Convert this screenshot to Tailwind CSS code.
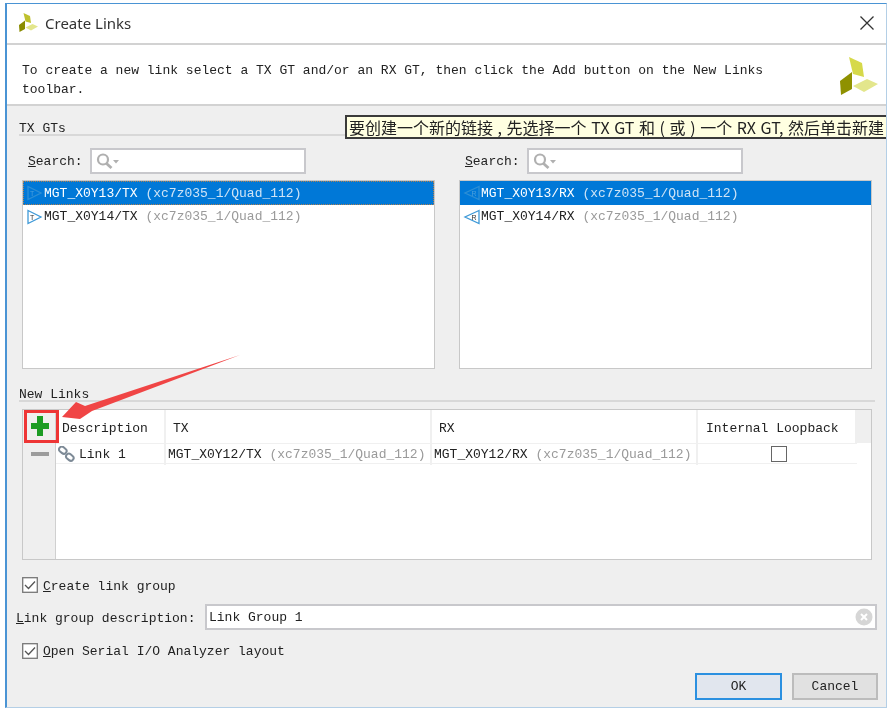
<!DOCTYPE html>
<html>
<head>
<meta charset="utf-8">
<script src="https://cdn.jsdelivr.net/npm/@tailwindcss/browser@4"></script>
</head>
<body class="bg-white">
<div class="w-[893px] h-[713px] overflow-hidden bg-white pt-[3px] pl-[5px] font-['Liberation_Mono',monospace] text-[13px] text-[#222] blur-[0.5px]">
  <div class="relative w-[882px] h-[705px] flex flex-col overflow-hidden border-t border-l-2 border-r border-b border-t-[#4a94d4] border-l-[#4a94d4] border-r-[#b4cfe6] border-b-[#b4cfe6] bg-white">
    <!-- title -->
    <div class="h-[41px] shrink-0 flex items-center border-b-2 border-[#d2d2d2] pl-[11px] pr-[12px]">
      <svg class="-mt-[3px]" width="21" height="21" viewBox="0 0 42 42"><path d="M11 2 24 8 26 22 15 19Z" fill="#bfc12e"/><path d="M2 26 14 17 14 34 3 40Z" fill="#8a8c00"/><path d="M15 31 29 24 40 29 26 37Z" fill="#e3e68c"/></svg>
      <span class="ml-[6px] font-['Noto_Sans',sans-serif] text-[15px] text-[#333]">Create Links</span>
      <svg class="ml-auto -mt-[2px]" width="14" height="14" viewBox="0 0 14 14"><path d="M0.5 0.5 13.5 13.5M13.5 0.5 0.5 13.5" stroke="#333" stroke-width="1.3" fill="none"/></svg>
    </div>
    <!-- description -->
    <div class="relative h-[61px] shrink-0 border-b-2 border-[#d2d2d2] pl-[15px] pt-[16px] leading-[19px]">
      <p class="w-[760px]">To create a new link select a TX GT and/or an RX GT, then click the Add button on the New Links toolbar.</p>
      <svg class="absolute left-[831px] top-[10px]" width="42" height="42" viewBox="0 0 42 42"><path d="M11 2 24 8 26 22 15 19Z" fill="#d6d94a"/><path d="M2 26 14 17 14 34 3 40Z" fill="#8f9100"/><path d="M15 31 29 24 40 29 26 37Z" fill="#e3e68c"/></svg>
    </div>
    <!-- body -->
    <div class="flex-1 flex flex-col bg-[#efefef] pl-[9px] pr-[9px]">
      <div class="mt-[14px] ml-[3px] mr-[2px] h-[16px] border-b-2 border-[#d8d8d8] leading-[18px]">TX GTs</div>
      <div class="mt-[12px] ml-[6px] mr-[5px] grid grid-cols-2 gap-x-[24px]">
        <div>
          <div class="flex items-center h-[26px] pl-[6px]">
            <span class="w-[62px] pt-[2px]"><span class="underline">S</span>earch:</span>
            <div class="w-[216px] h-[26px] bg-white border-2 border-[#c8c8cc] flex items-center pl-[4px]">
              <svg width="24" height="16" viewBox="0 0 24 16"><circle cx="7" cy="6.500" r="5" fill="none" stroke="#b0b0b0" stroke-width="2.200"/><path d="M10.500 10.500 15.500 15" stroke="#b0b0b0" stroke-width="2.800"/><path d="M17 7h6l-3 3.500Z" fill="#b0b0b0"/></svg>
            </div>
          </div>
          <div class="mt-[6px] h-[189px] bg-white border border-[#c8c8c8]">
            <div class="h-[24px] bg-[#0078d7] border border-dotted border-[#b08050] flex items-center pl-[2px] text-white">
              <svg class="w-[18px] shrink-0" width="18" height="16" viewBox="0 0 18 16"><path d="M2 1.500 15 8 2 14.500Z" fill="#0078d7" stroke="#2d8fd5" stroke-width="1.300"/><text x="4" y="10.500" font-size="7" fill="#4a9fdc" font-family="Liberation Sans">T</text></svg>
              <span class="whitespace-pre pt-px">MGT_X0Y13/TX <span class="text-[#cfe4f6]">(xc7z035_1/Quad_112)</span></span>
            </div>
            <div class="h-[23px] flex items-center pl-[3px]">
              <svg class="w-[18px] shrink-0" width="18" height="16" viewBox="0 0 18 16"><path d="M2 1.500 15 8 2 14.500Z" fill="#fff" stroke="#3f9ad8" stroke-width="1.300"/><text x="4" y="10.500" font-size="7" fill="#333" font-family="Liberation Sans">T</text></svg>
              <span class="whitespace-pre">MGT_X0Y14/TX <span class="text-[#9a9a9a]">(xc7z035_1/Quad_112)</span></span>
            </div>
          </div>
        </div>
        <div>
          <div class="flex items-center h-[26px] pl-[6px]">
            <span class="w-[62px] pt-[2px]"><span class="underline">S</span>earch:</span>
            <div class="w-[216px] h-[26px] bg-white border-2 border-[#c8c8cc] flex items-center pl-[4px]">
              <svg width="24" height="16" viewBox="0 0 24 16"><circle cx="7" cy="6.500" r="5" fill="none" stroke="#b0b0b0" stroke-width="2.200"/><path d="M10.500 10.500 15.500 15" stroke="#b0b0b0" stroke-width="2.800"/><path d="M17 7h6l-3 3.500Z" fill="#b0b0b0"/></svg>
            </div>
          </div>
          <div class="mt-[6px] h-[189px] bg-white border border-[#c8c8c8]">
            <div class="h-[24px] bg-[#0078d7] flex items-center pl-[3px] text-white">
              <svg class="w-[18px] shrink-0" width="18" height="16" viewBox="0 0 18 16"><path d="M16 1.500 2 8 16 14.500Z" fill="#0078d7" stroke="#2d8fd5" stroke-width="1.300"/><text x="8.500" y="10.500" font-size="7" fill="#4a9fdc" font-family="Liberation Sans">R</text></svg>
              <span class="whitespace-pre pt-px">MGT_X0Y13/RX <span class="text-[#cfe4f6]">(xc7z035_1/Quad_112)</span></span>
            </div>
            <div class="h-[23px] flex items-center pl-[3px]">
              <svg class="w-[18px] shrink-0" width="18" height="16" viewBox="0 0 18 16"><path d="M16 1.500 2 8 16 14.500Z" fill="#fff" stroke="#3f9ad8" stroke-width="1.300"/><text x="8.500" y="10.500" font-size="7" fill="#333" font-family="Liberation Sans">R</text></svg>
              <span class="whitespace-pre">MGT_X0Y14/RX <span class="text-[#9a9a9a]">(xc7z035_1/Quad_112)</span></span>
            </div>
          </div>
        </div>
      </div>
      <div class="mt-[17px] ml-[3px] mr-[2px] h-[16px] border-b-2 border-[#d8d8d8] leading-[18px]">New Links</div>
      <!-- table -->
      <div class="mt-[7px] ml-[6px] mr-[5px] h-[151px] flex border border-[#c8c8c8] bg-white">
        <div class="w-[33px] shrink-0 bg-[#efefef] border-r border-[#d0d0d0] flex flex-col items-center">
          <svg class="mt-[6px] ml-px" width="18" height="20" viewBox="0 0 18 20"><path d="M6 0h6v7h6v6h-6v7H6v-7H0V7h6Z" fill="#1c9c24"/></svg>
          <div class="mt-[16px] ml-px w-[18px] h-[4px] bg-[#9c9c9c]"></div>
        </div>
        <div class="flex-1 flex flex-col">
          <div class="h-[33px] grid grid-cols-[110px_266px_266px_157px_1fr] items-stretch">
            <div class="flex items-center pl-[6px] pt-[4px] border-r-2 border-[#f0f0f0]">Description</div>
            <div class="flex items-center pl-[7px] pt-[4px] border-r-2 border-[#f0f0f0]">TX</div>
            <div class="flex items-center pl-[7px] pt-[4px] border-r-2 border-[#f0f0f0]">RX</div>
            <div class="flex items-center pl-[8px] pt-[4px] whitespace-nowrap">Internal Loopback</div>
            <div class="bg-[#efefef]"></div>
          </div>
          <div class="h-[21px] w-[801px] grid grid-cols-[110px_266px_266px_157px] items-stretch border-t border-b border-[#f0f0f0]">
            <div class="flex items-center pl-[2px] border-r-2 border-[#f0f0f0]">
              <svg width="18" height="16" viewBox="0 0 18 16"><g fill="none" stroke="#7d8a96" stroke-width="2"><rect x="1" y="1.500" width="8" height="5.500" rx="2.700" transform="rotate(40 5 4)"/><rect x="8" y="8.500" width="8" height="5.500" rx="2.700" transform="rotate(40 12 11)"/></g></svg>
              <span class="ml-[3px] pt-px">Link 1</span>
            </div>
            <div class="flex items-center pl-[2px] whitespace-pre border-r-2 border-[#f0f0f0]">MGT_X0Y12/TX <span class="text-[#9a9a9a]">(xc7z035_1/Quad_112)</span></div>
            <div class="flex items-center pl-[2px] whitespace-pre border-r-2 border-[#f0f0f0]">MGT_X0Y12/RX <span class="text-[#9a9a9a]">(xc7z035_1/Quad_112)</span></div>
            <div class="flex items-center justify-center"><div class="w-[16px] h-[16px] bg-white border-[1.500px] border-[#666] ml-[5px]"></div></div>
          </div>
        </div>
      </div>
      <label class="mt-[17px] ml-[6px] h-[16px] flex items-center">
        <svg width="16" height="16" viewBox="0 0 16 16"><rect x="0.700" y="0.700" width="14.600" height="14.600" fill="#fff" stroke="#777" stroke-width="1.300"/><path d="M3 8 6.500 11.500 13 4.500" fill="none" stroke="#555" stroke-width="1.300"/></svg>
        <span class="ml-[5px] pt-[3px]"><span class="underline">C</span>reate link group</span>
      </label>
      <div class="mt-[11px] h-[26px] flex items-center">
        <span class="w-[189px] shrink-0 pt-[3px]"><span class="underline">L</span>ink group description:</span>
        <div class="flex-1 h-[26px] bg-white border-2 border-[#c8c8cc] flex items-center pl-[2px] pr-[2px]">
          <span class="pt-[2px]">Link Group 1</span>
          <svg class="ml-auto" width="18" height="18" viewBox="0 0 18 18"><circle cx="9" cy="9" r="8.500" fill="#d6d6d6"/><path d="M6 6 12 12M12 6 6 12" stroke="#fff" stroke-width="2"/></svg>
        </div>
      </div>
      <label class="mt-[13px] ml-[6px] h-[16px] flex items-center">
        <svg width="16" height="16" viewBox="0 0 16 16"><rect x="0.700" y="0.700" width="14.600" height="14.600" fill="#fff" stroke="#777" stroke-width="1.300"/><path d="M3 8 6.500 11.500 13 4.500" fill="none" stroke="#555" stroke-width="1.300"/></svg>
        <span class="ml-[5px] pt-px"><span class="underline">O</span>pen Serial I/O Analyzer layout</span>
      </label>
      <div class="mt-[14px] -mr-px flex justify-end gap-[10px]">
        <button class="w-[87px] h-[27px] bg-[#e1e6ee] border-2 border-[#2b90e0]">OK</button>
        <button class="w-[86px] h-[27px] bg-[#e1e1e1] border-2 border-[#bcbcbc]">Cancel</button>
      </div>
    </div>
    <!-- tooltip -->
    <div class="absolute left-[338px] top-[111px] h-[24px] w-[541px] flex items-center overflow-hidden bg-[#ffffe1] border-2 border-r-0 border-[#3a3a3a] pl-[2px] whitespace-nowrap font-['Noto_Sans_CJK_SC',sans-serif] text-[16px] [word-spacing:1px] text-[#222]">要创建一个新的链接 , 先选择一个 TX GT 和 ( 或 ) 一个 RX GT, 然后单击新建</div>
    <!-- red callout -->
    <div class="absolute left-[17px] top-[406px] w-[35px] h-[33px] border-[3px] border-[#ee3535]"></div>
    <svg class="absolute left-0 top-0 pointer-events-none" width="260" height="440" viewBox="7 4 260 440"><path d="M62 417 76 402 85 406 240 355 92 411 80 419Z" fill="#f04545"/></svg>
  </div>
</div>
</body>
</html>
